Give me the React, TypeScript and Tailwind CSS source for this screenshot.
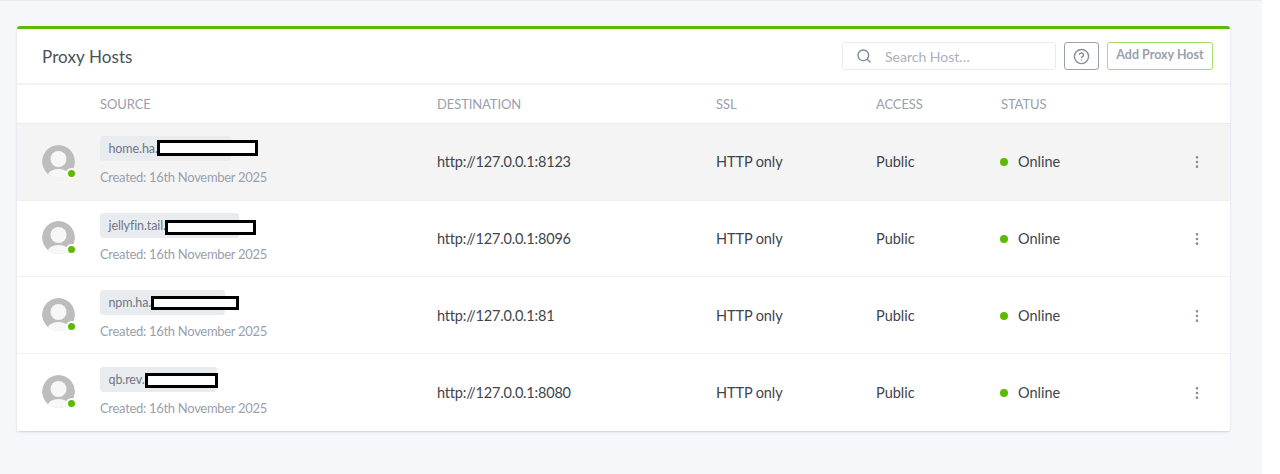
import { CircleHelp, EllipsisVertical, Search } from 'lucide-react'

interface Host {
  name: string
  chipWidth: string
  maskClass: string
  destination: string
  active?: boolean
}

const hosts: Host[] = [
  { name: 'home.ha.', chipWidth: 'w-[131px]', maskClass: 'left-[57px] top-[4px] w-[101px] h-[16px]', destination: 'http://127.0.0.1:8123', active: true },
  { name: 'jellyfin.tail.', chipWidth: 'w-[139px]', maskClass: 'left-[65px] top-[7px] w-[91px] h-[15px]', destination: 'http://127.0.0.1:8096' },
  { name: 'npm.ha.', chipWidth: 'w-[125px]', maskClass: 'left-[51px] top-[6px] w-[88px] h-[14px]', destination: 'http://127.0.0.1:81' },
  { name: 'qb.rev.', chipWidth: 'w-[117px]', maskClass: 'left-[45px] top-[6px] w-[73px] h-[15px]', destination: 'http://127.0.0.1:8080' },
]

const columns = 'grid grid-cols-[83px_337px_279px_160px_125px_1fr] items-center'

function Avatar() {
  return (
    <div className="relative mb-[1px] h-[33px] w-[33px]">
      <svg viewBox="0 0 33 33" className="h-[33px] w-[33px] rounded-full">
        <circle cx="16.5" cy="16.5" r="16.5" fill="#bdbdbd" />
        <circle cx="16.5" cy="14" r="8" fill="#f7f7f7" />
        <ellipse cx="16.5" cy="31" rx="11" ry="7" fill="#f7f7f7" />
      </svg>
      <span className="absolute bottom-[-1px] right-[-2px] h-[11px] w-[11px] rounded-full border-2 border-white bg-[#5eba00]" />
    </div>
  )
}

function HostRow({ host }: { host: Host }) {
  return (
    <div className={`${columns} h-[76.67px] border-b border-[#eef0f3] last:border-b-0 ${host.active ? 'bg-[#f4f4f4]' : 'bg-white'}`}>
      <div className="pl-[25px]">
        <Avatar />
      </div>
      <div className="mb-[1px]">
        <div className={`relative h-[25px] ${host.chipWidth} rounded-[3px] bg-[#e9ecef] pl-[8.5px] text-[12.5px] leading-[26px] tracking-[-0.1px] text-[#6e7687]`}>
          {host.name}
          <span className={`absolute border-[3px] border-black bg-white ${host.maskClass}`} />
        </div>
        <div className="mt-[7px] text-[13px] leading-[18px] tracking-[-0.3px] text-[#9aa0ac]">Created: 16th November 2025</div>
      </div>
      <div className="pt-[1px] text-[14.5px] tracking-[-0.2px] text-[#3f444d]">{host.destination}</div>
      <div className="pt-[1px] text-[14.5px] tracking-[-0.1px] text-[#3f444d]">HTTP only</div>
      <div className="pt-[1px] text-[14.5px] text-[#3f444d]">Public</div>
      <div className="flex items-center justify-between pr-[25px] pt-[1px] text-[14.5px] text-[#3f444d]">
        <span className="-ml-[1px] flex items-center gap-[10px]">
          <span className="h-[8px] w-[8px] rounded-full bg-[#5eba00]" />
          Online
        </span>
        <EllipsisVertical className="h-[16px] w-[16px] text-[#868e9c]" />
      </div>
    </div>
  )
}

export default function App() {
  return (
    <div className="h-[474px] bg-white font-['Lato',sans-serif]">
      <div className="h-full w-[1262px] border-t border-[#e9ecf2] bg-[#f5f7fb] px-[17px] pt-[25px]">
        <div className="w-[1213px] overflow-hidden rounded-[3px] border-t-[3px] border-[#5eba00] bg-white shadow-[0_1px_2px_rgba(110,120,140,0.3)]">
          <div className="flex h-[56px] items-center justify-between border-b-2 border-[#f1f3f7] pl-[25px] pr-[17px]">
            <h1 className="mt-[1px] text-[17px] font-normal tracking-[0.1px] text-[#495057]">Proxy Hosts</h1>
            <div className="flex items-center gap-[8px]">
              <div className="flex h-[28px] w-[214px] items-center gap-[13px] rounded-[3px] border border-[#e9ecef] pl-[13px] text-[14px] text-[#aab0bb]">
                <Search className="h-[16px] w-[16px] text-[#7c8494]" />
                Search Host…
              </div>
              <div className="flex h-[28px] w-[35px] items-center justify-center rounded-[3px] border border-[#9aa0ac]">
                <CircleHelp className="h-[17px] w-[17px] text-[#868e9c]" />
              </div>
              <div className="flex h-[28px] w-[106px] items-center justify-center rounded-[3px] border border-[#a6de70] pb-[1px] text-[12.5px] font-bold text-[#9aa0ac]">
                Add Proxy Host
              </div>
            </div>
          </div>
          <div className={`${columns} h-[39px] border-b border-[#e9ecef] pt-[2px] text-[13px] tracking-[-0.1px] text-[#9aa0ac]`}>
            <span />
            <span>SOURCE</span>
            <span>DESTINATION</span>
            <span>SSL</span>
            <span>ACCESS</span>
            <span>STATUS</span>
          </div>
          {hosts.map((host) => (
            <HostRow key={host.name} host={host} />
          ))}
        </div>
      </div>
    </div>
  )
}
